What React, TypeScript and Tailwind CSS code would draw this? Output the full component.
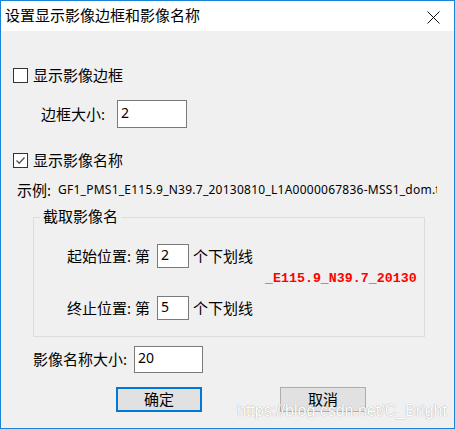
import React from "react";

const F = { fontFamily: '"Noto Sans", "Noto Sans CJK SC", sans-serif' };

function Box({ checked }: { checked?: boolean }) {
  return (
    <div className="w-[15px] h-[15px] border border-[#333333] bg-white flex items-center justify-center shrink-0">
      {checked && (
        <svg width="11" height="11" viewBox="0 0 11 11">
          <path d="M1.5 5.5 L4.2 8.2 L9.5 2.5" fill="none" stroke="#555" strokeWidth="1.4" />
        </svg>
      )}
    </div>
  );
}

function Field({ v, w, h }: { v: string; w: string; h: string }) {
  return (
    <div className={`${w} ${h} border border-[#7a7a7a] bg-white flex items-center pl-[3px] text-[14px] text-[#000] shrink-0`}>
      <span className="-mt-[3px]">{v}</span>
    </div>
  );
}

export default function App() {
  return (
    <div
      className="relative w-[455px] h-[429px] border border-[#1883d7] bg-[#f0f0f0] flex flex-col text-[15px] text-black leading-none overflow-hidden"
      style={F}
    >
      <div className="h-[30px] bg-white flex items-center justify-between pl-[4px] pr-[14px] shrink-0">
        <span className="text-[15px] -mt-[1px]">设置显示影像边框和影像名称</span>
        <svg width="13" height="13" viewBox="0 0 13 13" className="mt-[2px]">
          <path d="M0.5 0.5 L12.5 12.5 M12.5 0.5 L0.5 12.5" stroke="#111" strokeWidth="1" />
        </svg>
      </div>

      <div className="mt-[34px] h-[20px] flex items-center pl-[12px]">
        <Box />
        <span className="ml-[5px]">显示影像边框</span>
      </div>

      <div className="mt-[15px] h-[28px] flex items-center pl-[40px]">
        <span className="w-[76px]">边框大小:</span>
        <Field v="2" w="w-[70px]" h="h-[28px]" />
      </div>

      <div className="mt-[22px] h-[20px] flex items-center pl-[12px]">
        <Box checked />
        <span className="ml-[5px]">显示影像名称</span>
      </div>

      <div className="mt-[10px] h-[20px] flex items-center pl-[16px]">
        <span className="w-[41px] shrink-0">示例:</span>
        <span className="w-[379px] overflow-hidden whitespace-nowrap text-[12px] tracking-[0.25px]">
          GF1_PMS1_E115.9_N39.7_20130810_L1A0000067836-MSS1_dom.tif
        </span>
      </div>

      <div className="mt-[17px] ml-[32px] w-[392px] h-[120px] border border-[#dcdcdc] relative flex flex-col">
        <span className="absolute left-[6px] -top-[9px] px-[3px] bg-[#f0f0f0]">截取影像名</span>
        <div className="mt-[26px] h-[24px] flex items-center pl-[33px]">
          <span className="w-[90px]">起始位置: 第</span>
          <Field v="2" w="w-[32px]" h="h-[24px]" />
          <span className="ml-[4px]">个下划线</span>
        </div>
        <div
          className="mt-[3px] h-[16px] flex items-center pl-[231px] text-[13.3px] font-bold text-[#ff0000]"
          style={{ fontFamily: '"Liberation Mono", monospace' }}
        >
          _E115.9_N39.7_20130
        </div>
        <div className="mt-[9px] h-[24px] flex items-center pl-[33px]">
          <span className="w-[90px]">终止位置: 第</span>
          <Field v="5" w="w-[32px]" h="h-[24px]" />
          <span className="ml-[4px]">个下划线</span>
        </div>
      </div>

      <div className="mt-[9px] h-[27px] flex items-center pl-[32px]">
        <span className="w-[101px]">影像名称大小:</span>
        <Field v="20" w="w-[69px]" h="h-[27px]" />
      </div>

      <div className="mt-[14px] h-[25px] flex items-center pl-[115px]">
        <div className="w-[86px] h-[25px] border-2 border-[#0078d7] bg-[#e1e1e1] flex items-center justify-center">
          <span className="-mt-[1px]">确定</span>
        </div>
        <div className="ml-[78px] w-[86px] h-[25px] border border-[#adadad] bg-[#e1e1e1] flex items-center justify-center">
          <span className="-mt-[1px]">取消</span>
        </div>
      </div>

      <span
        className="absolute left-[236px] top-[402px] text-[16px] text-white [text-shadow:0_0_1px_#8a8a8a]"
        style={{ fontFamily: '"Liberation Sans", Arial, sans-serif' }}
      >
        https://blog.csdn.net/C_Bright
      </span>
    </div>
  );
}
